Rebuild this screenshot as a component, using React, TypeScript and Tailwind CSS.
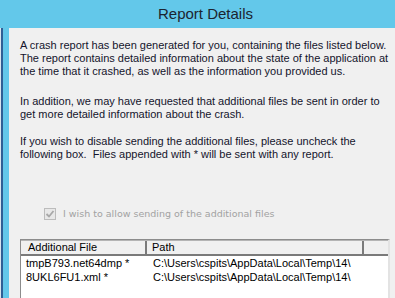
import React from 'react';

const files = [
  { name: 'tmpB793.net64dmp *', path: 'C:\\Users\\cspits\\AppData\\Local\\Temp\\14\\' },
  { name: '8UKL6FU1.xml *', path: 'C:\\Users\\cspits\\AppData\\Local\\Temp\\14\\' },
];

export default function App() {
  return (
    <div
      className="relative w-[395px] h-[298px] overflow-hidden flex flex-col bg-[#63c8ea] text-[#14142c]"
      style={{ fontFamily: '"Liberation Sans", Arial, sans-serif' }}
    >
      {/* Title bar */}
      <div className="h-[28px] shrink-0 flex items-center justify-center pl-[16px]">
        <span className="text-[15px] text-[#1c2430]">Report Details</span>
      </div>

      <div className="flex flex-1 min-h-0">
        {/* Left window frame */}
        <div className="w-[9px] shrink-0 flex">
          <div className="w-[1px] bg-[#d8e4ee]" />
          <div className="w-[2px] bg-[#2f5f95]" />
        </div>

        {/* Body */}
        <div className="flex-1 bg-[#f0f0f0] pl-[11px] pt-[11px] text-[11px] leading-[13px]">
          <p>
            A crash report has been generated for you, containing the files listed below.
            <br />
            The report contains detailed information about the state of the application at
            <br />
            the time that it crashed, as well as the information you provided us.
          </p>
          <p className="mt-[17px]">
            In addition, we may have requested that additional files be sent in order to
            <br />
            get more detailed information about the crash.
          </p>
          <p className="mt-[14px]">
            If you wish to disable sending the additional files, please uncheck the
            <br />
            following box.&nbsp; Files appended with * will be sent with any report.
          </p>

          {/* Disabled checkbox */}
          <div className="mt-[46px] ml-[24px] flex items-center gap-[7px] h-[13px]">
            <div className="w-[12px] h-[12px] border border-[#bcbcbc] bg-[#e8e8e8] flex items-center justify-center">
              <svg width="10" height="10" viewBox="0 0 10 10">
                <path d="M1.5 5 L4 7.5 L8.5 2" fill="none" stroke="#a8a8a8" strokeWidth="1.8" />
              </svg>
            </div>
            <span className="text-[#a2a2a2]" style={{ fontFamily: '"DejaVu Sans", Verdana, sans-serif', fontSize: '9.5px' }}>
              I wish to allow sending of the additional files
            </span>
          </div>

          {/* List view */}
          <div className="mt-[19px] mr-[5px] h-[80px] border-l border-t border-[#8c8c8c] border-r-2 border-r-[#e3e3e3] bg-white">
            <div className="flex h-[16px] bg-[#f0f0f0] border-t border-[#b4b4b4] border-b-2 border-b-[#7a7a7a] text-black">
              <div className="w-[126px] pl-[7px] flex items-center border-r-2 border-[#7a7a7a]">Additional File</div>
              <div className="w-[217px] pl-[5px] flex items-center border-r-2 border-[#7a7a7a]">Path</div>
              <div className="flex-1" />
            </div>
            <div className="text-black">
              {files.map((f) => (
                <div key={f.name} className="flex h-[14px] items-center">
                  <div className="w-[126px] pl-[5px]">{f.name}</div>
                  <div className="pl-[6px]">{f.path}</div>
                </div>
              ))}
            </div>
          </div>
        </div>
      </div>
    </div>
  );
}
